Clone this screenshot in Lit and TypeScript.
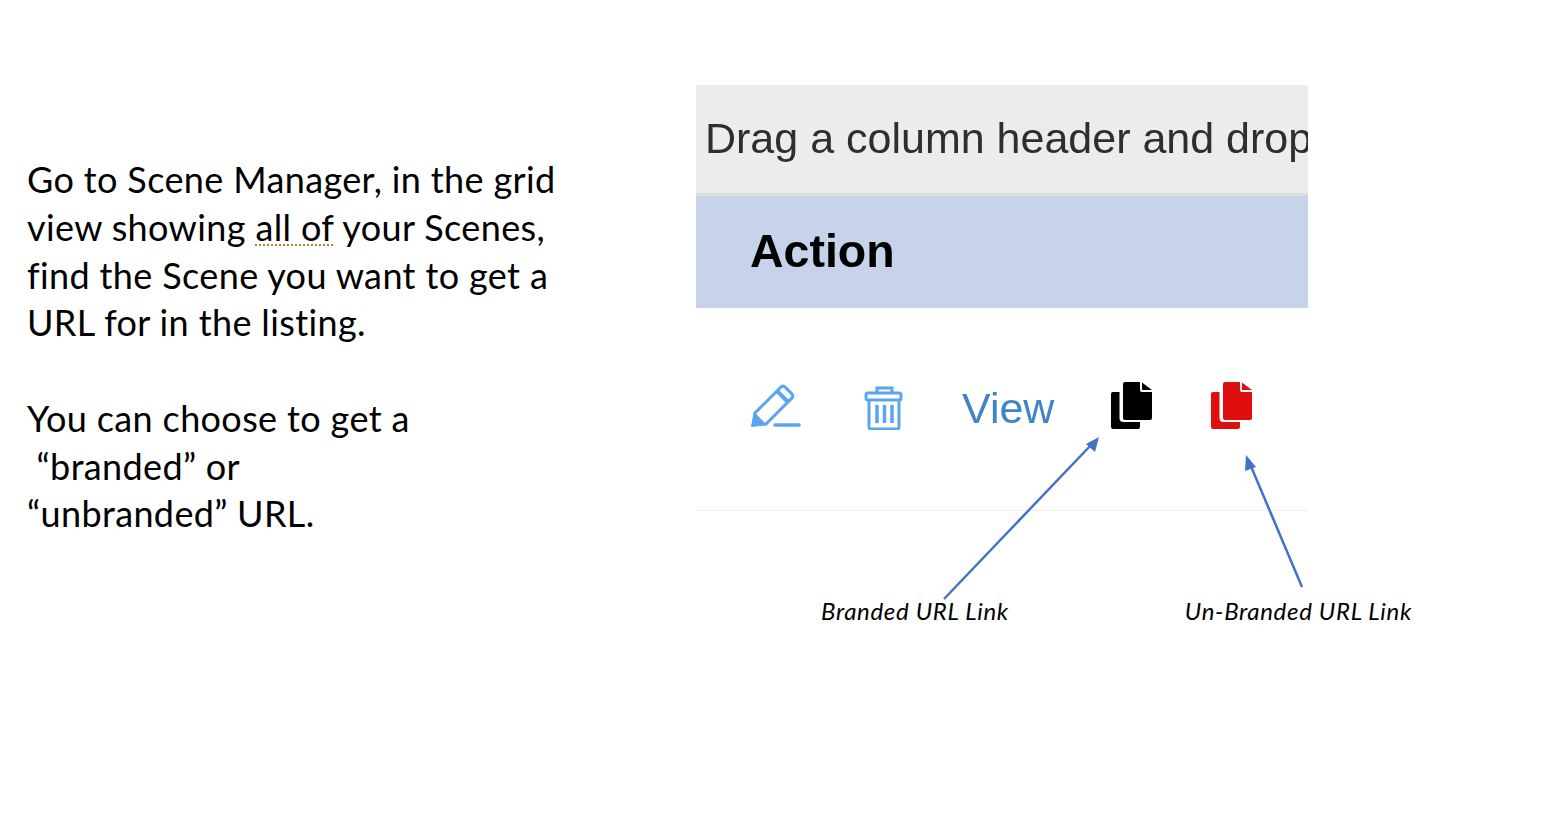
import {LitElement, html, css, svg} from 'lit';
import {customElement} from 'lit/decorators.js';

const copyIcon = svg`
  <path d="M12 2a2 2 0 0 1 2-2h15v8a2 2 0 0 0 2 2h10v26a2 2 0 0 1-2 2H14a2 2 0 0 1-2-2z" />
  <path d="M31 .5 41 8H31z" />
  <path d="M0 12a2 2 0 0 1 2-2h6.500v26a4 4 0 0 0 4 4H29v5a2 2 0 0 1-2 2H2a2 2 0 0 1-2-2z" />
`;

@customElement('app-root')
export class AppRoot extends LitElement {
  static styles = css`
    :host {
      display: block;
      position: relative;
      width: 1556px;
      height: 824px;
      background: #fff;
      overflow: hidden;
      font-family: 'Lato', 'Liberation Sans', sans-serif;
      color: #000;
    }
    .slide {
      display: flex;
    }
    .notes {
      width: 696px;
      box-sizing: border-box;
      padding: 156.300px 0 0 27px;
      font-size: 36px;
      line-height: 47.700px;
      letter-spacing: 0.370px;
    }
    .notes p {
      margin: 0 0 47.700px;
    }
    .squiggle {
      text-decoration: underline dotted #b5802f 1.500px;
      text-underline-offset: 3px;
    }
    .shot {
      padding-top: 85px;
      display: flex;
      flex-direction: column;
    }
    .panel {
      width: 612px;
      overflow: hidden;
      font-family: 'Liberation Sans', Arial, sans-serif;
      filter: blur(0.4px);
    }
    .group-bar {
      height: 108px;
      box-sizing: border-box;
      padding: 27px 0 0 9px;
      background: #edecec;
      font-size: 43px;
      line-height: 52px;
      color: #2e2e2e;
      white-space: nowrap;
    }
    .head {
      height: 110px;
      display: flex;
      align-items: center;
      padding: 0 0 2px 54px;
      background: #c6d3ea;
      border-top: 3px solid #dcdcdc;
      font-size: 46.500px;
      font-weight: 700;
    }
    .row {
      height: 203px;
      box-sizing: border-box;
      display: flex;
      align-items: flex-start;
      padding: 74px 0 0 55px;
      border-bottom: 1px solid #f0f0f0;
      color: #3f85c6;
    }
    .row svg {
      display: block;
      flex: none;
    }
    .edit {
      fill: none;
      stroke: #5ba4ee;
      stroke-width: 3;
    }
    .trash {
      fill: none;
      stroke: #5ba4ee;
      stroke-width: 3;
      margin: 4px 0 0 63px;
    }
    .view {
      margin-left: 58px;
      font-size: 43px;
      line-height: 52px;
    }
    .copy {
      margin-left: 57px;
      fill: #000;
    }
    .copy.red {
      margin-left: 58px;
      fill: #e00f0f;
    }
    .captions {
      display: flex;
      padding: 86px 0 0 125px;
      font-size: 24px;
      line-height: 28px;
      letter-spacing: 0.680px;
      font-style: italic;
      white-space: nowrap;
    }
    .captions span + span {
      margin-left: 176px;
    }
    .arrows {
      position: absolute;
      inset: 0;
      pointer-events: none;
    }
  `;

  render() {
    return html`
      <div class="slide">
        <section class="notes">
          <p>
            Go to Scene Manager, in the grid<br />
            view showing <span class="squiggle">all of</span> your Scenes,<br />
            find the Scene you want to get a<br />
            URL for in the listing.
          </p>
          <p>
            You can choose to get a<br />
            &nbsp;“branded” or<br />
            “unbranded” URL.
          </p>
        </section>
        <section class="shot">
          <div class="panel">
            <div class="group-bar">Drag a column header and drop</div>
            <div class="head">Action</div>
            <div class="row">
              <svg class="edit" width="50" height="48" viewBox="0 0 50 48">
                <path d="M2 43 L4 31 L29 6 Q31 3 34 5 L41 12 Q43 15 40 17 L15 42 Z" />
                <path d="M26 9 L37 20" stroke-width="4" />
                <path d="M2 43 L4 33 L13 42 Z" fill="#5ba4ee" />
                <path d="M24 43 H48" stroke-linecap="round" stroke-width="3.500" />
              </svg>
              <svg class="trash" width="40" height="44" viewBox="0 0 40 44">
                <path d="M13 7 V2 H28 V7" />
                <rect x="2" y="7" width="35" height="7" rx="2" />
                <path d="M5 14 V41 Q5 43 7 43 H33 Q35 43 35 41 V14" />
                <path d="M13 19 V37 M20.500 19 V37 M28 19 V37" stroke-width="3.500" />
              </svg>
              <span class="view">View</span>
              <svg class="copy" width="42" height="48" viewBox="0 0 42 48">${copyIcon}</svg>
              <svg class="copy red" width="42" height="48" viewBox="0 0 42 48">${copyIcon}</svg>
            </div>
          </div>
          <div class="captions">
            <span>Branded URL Link</span>
            <span>Un-Branded URL Link</span>
          </div>
        </section>
      </div>
      <svg class="arrows" width="1556" height="824" viewBox="0 0 1556 824">
        <g stroke="#4472c4" stroke-width="2.500" fill="#4472c4">
          <path d="M944 599 L1092 444" />
          <path d="M1099 437 L1095 452 L1086 444 Z" stroke="none" />
          <path d="M1302 587 L1250 464" />
          <path d="M1246 455 L1256 467 L1245 471 Z" stroke="none" />
        </g>
      </svg>
    `;
  }
}
